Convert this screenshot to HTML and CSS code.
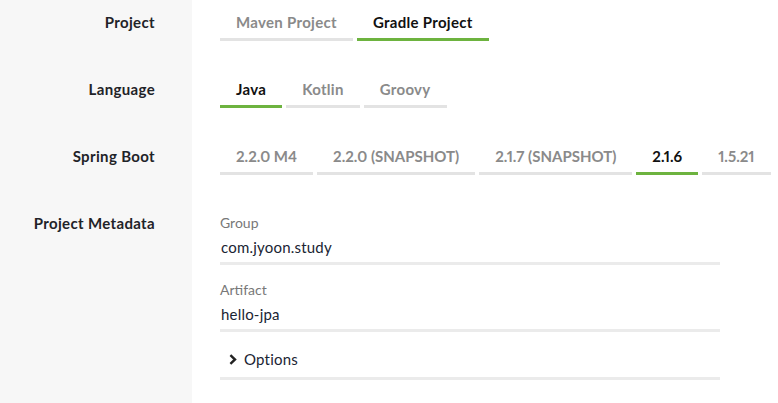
FILE: index.html
```html
<!DOCTYPE html>
<html lang="en">
<head>
<meta charset="utf-8">
<title>Spring Initializr</title>
<link rel="stylesheet" href="styles.css">
</head>
<body>
<main class="form">
  <div class="label-cell"><span class="label">Project</span></div>
  <div class="control-cell">
    <div class="tabs">
      <span class="tab">Maven Project</span>
      <span class="tab active">Gradle Project</span>
    </div>
  </div>

  <div class="label-cell"><span class="label">Language</span></div>
  <div class="control-cell">
    <div class="tabs">
      <span class="tab active">Java</span>
      <span class="tab">Kotlin</span>
      <span class="tab">Groovy</span>
    </div>
  </div>

  <div class="label-cell"><span class="label">Spring Boot</span></div>
  <div class="control-cell">
    <div class="tabs versions">
      <span class="tab">2.2.0 M4</span>
      <span class="tab">2.2.0 (SNAPSHOT)</span>
      <span class="tab">2.1.7 (SNAPSHOT)</span>
      <span class="tab active">2.1.6</span>
      <span class="tab">1.5.21</span>
    </div>
  </div>

  <div class="label-cell last"><span class="label">Project Metadata</span></div>
  <div class="control-cell last">
    <div class="field">
      <div class="field-label">Group</div>
      <div class="field-input">com.jyoon.study</div>
    </div>
    <div class="field">
      <div class="field-label">Artifact</div>
      <div class="field-input">hello-jpa</div>
    </div>
    <div class="options">
      <svg class="chevron" width="8" height="11" viewBox="0 0 8 11" aria-hidden="true">
        <polyline points="1.4,1.2 6,5.5 1.4,9.8" fill="none" stroke="#222" stroke-width="2.4"/>
      </svg>
      <span>Options</span>
    </div>
  </div>
</main>
</body>
</html>
```

FILE: styles.css
```css
html, body {
  margin: 0;
  padding: 0;
  background: #ffffff;
}

body {
  font-family: "Lato", "Open Sans", sans-serif;
  color: #222;
  height: 403px;
  overflow: hidden;
}

.form {
  display: grid;
  grid-template-columns: 192px 1fr;
  min-height: 403px;
}

.label-cell {
  background: #f7f7f7;
  text-align: right;
  padding: 12px 37px 26px 0;
}

.label-cell.last {
  padding-bottom: 0;
}

.label {
  font-size: 15px;
  line-height: 20px;
  font-weight: 700;
  letter-spacing: 0.35px;
  color: #1f2328;
}

.control-cell {
  padding: 12px 0 26px 28px;
  overflow: hidden;
}

.tabs {
  display: flex;
  gap: 4px;
  white-space: nowrap;
}

.tab {
  font-size: 15px;
  line-height: 20px;
  font-weight: 700;
  letter-spacing: 0.3px;
  color: #8a8a8a;
  padding: 0 16px 6px;
  border-bottom: 3px solid #e3e3e3;
}

.versions .tab {
  letter-spacing: 0;
  font-variant-numeric: proportional-nums;
}

.tab.active {
  color: #111;
  border-bottom-color: #6db33f;
}

.field {
  width: 500px;
  margin-bottom: 15px;
}

.field-label {
  font-size: 14px;
  line-height: 20px;
  color: #787878;
}

.field-input {
  font-size: 15px;
  line-height: 24px;
  letter-spacing: 0.2px;
  padding: 2px 0 3px 1px;
  color: #1a2433;
  border-bottom: 3px solid #ebebeb;
}

.options {
  width: 500px;
  display: flex;
  align-items: center;
  gap: 7px;
  font-size: 15px;
  line-height: 24px;
  letter-spacing: 0.2px;
  color: #1a2433;
  padding: 0 0 6px 9px;
  border-bottom: 3px solid #ebebeb;
  box-sizing: border-box;
}

.chevron {
  display: block;
}
```
